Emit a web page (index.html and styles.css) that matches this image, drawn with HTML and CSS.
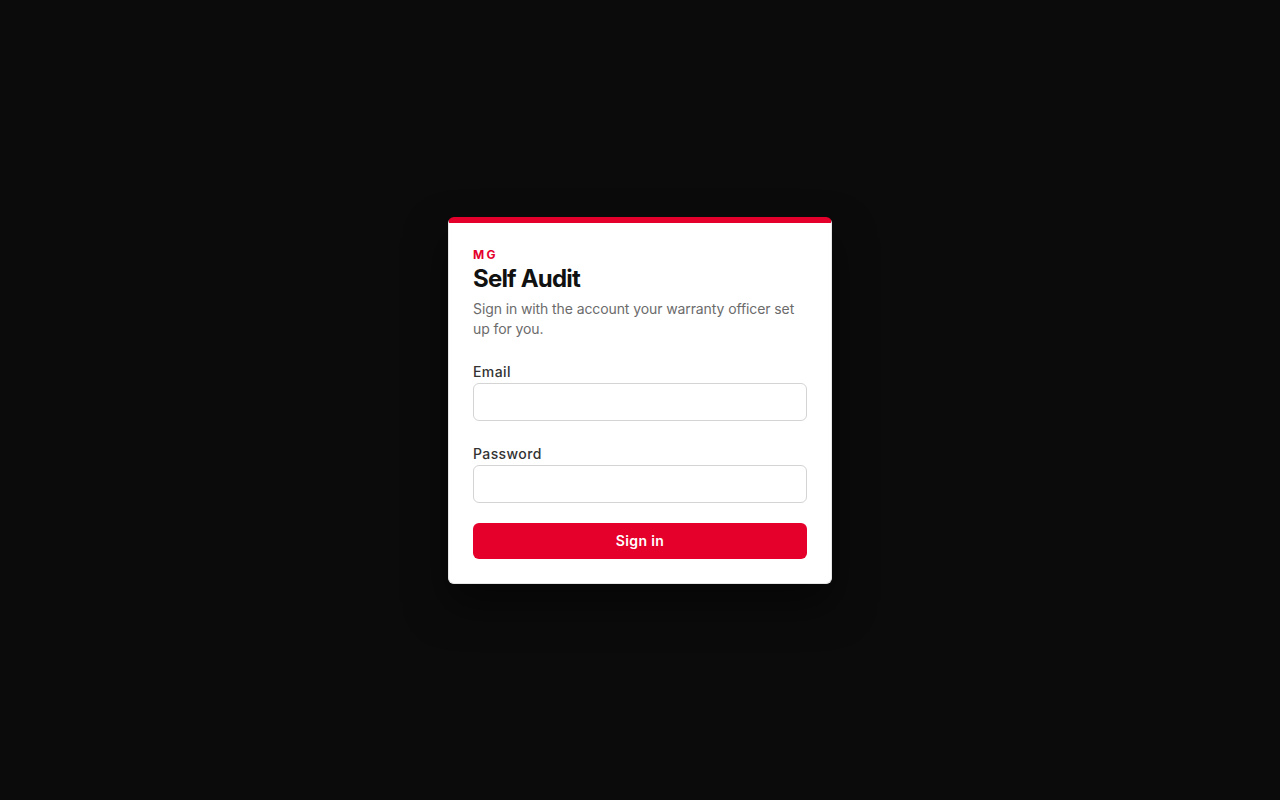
FILE: index.html
```html
<!DOCTYPE html>
<html lang="en">
<head>
<meta charset="utf-8">
<title>Self Audit — Sign in</title>
<link rel="stylesheet" href="styles.css">
</head>
<body>
<main class="page">
  <section class="card">
    <div class="brand">MG</div>
    <h1 class="title">Self Audit</h1>
    <p class="subtitle">Sign in with the account your warranty officer set up for you.</p>
    <form class="form">
      <label class="field">
        <span class="label">Email</span>
        <input class="input" type="email">
      </label>
      <label class="field">
        <span class="label">Password</span>
        <input class="input" type="password">
      </label>
      <button class="button" type="button">Sign in</button>
    </form>
  </section>
</main>
</body>
</html>
```
FILE: styles.css
```css
* { box-sizing: border-box; }
html, body { margin: 0; height: 100%; }
body {
  background: #0b0b0b;
  font-family: Inter, "Noto Sans", sans-serif;
  color: #111;
}
.page {
  min-height: 100vh;
  display: flex;
  align-items: center;
  justify-content: center;
}
.card {
  width: 384px;
  background: #fff;
  border: 1px solid #e6e6e6;
  border-top: 6px solid #e4002b;
  border-radius: 6px;
  padding: 24px;
  box-shadow: 0 20px 40px rgba(0,0,0,0.5);
}
.brand {
  color: #e4002b;
  font-size: 12px;
  font-weight: 700;
  letter-spacing: 2.2px;
  line-height: 16px;
}
.title {
  margin: 0;
  font-size: 24px;
  line-height: 32px;
  font-weight: 700;
  letter-spacing: -0.8px;
  color: #111;
}
.subtitle {
  margin: 4px 0 23px;
  font-size: 14px;
  line-height: 20px;
  letter-spacing: -0.1px;
  color: #6b6b6b;
}
.form {
  display: flex;
  flex-direction: column;
}
.field {
  display: flex;
  flex-direction: column;
  gap: 1px;
  margin-bottom: 23px;
}
.field:nth-child(2) { margin-bottom: 20px; }
.label {
  font-size: 14px;
  line-height: 20px;
  font-weight: 500;
  color: #333;
  letter-spacing: 0.4px;
}
.input {
  height: 38px;
  border: 1px solid #d4d4d4;
  border-radius: 6px;
  padding: 0 12px;
  font: inherit;
  font-size: 14px;
  background: #fff;
}
.button {
  height: 36px;
  border: 0;
  border-radius: 6px;
  background: #e4002b;
  color: #fff;
  font-family: inherit;
  font-size: 14px;
  font-weight: 600;
  letter-spacing: 0.4px;
  cursor: pointer;
}
```
